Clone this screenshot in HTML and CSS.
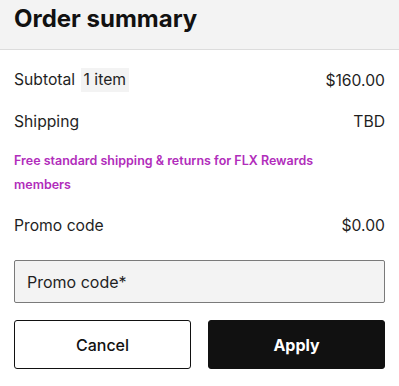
FILE: index.html
```html
<!DOCTYPE html>
<html lang="en">
<head>
    <meta charset="UTF-8">
    <meta name="viewport" content="width=device-width, initial-scale=1.0">
    <title>Order summary</title>
    <link rel="stylesheet" href="styles.css">
</head>
<body>

    <div class="summary">
        <div class="summary-header">
            <h2>Order summary</h2>
        </div>

        <div class="summary-body">
            <div class="row row-subtotal">
                <span class="label">Subtotal <span class="pill">1 item</span></span>
                <span class="value">$160.00</span>
            </div>

            <div class="row row-shipping">
                <span class="label">Shipping</span>
                <span class="value">TBD</span>
            </div>

            <p class="promo-note">Free standard shipping &amp; returns for FLX Rewards members</p>

            <div class="row row-promo">
                <span class="label">Promo code</span>
                <span class="value">$0.00</span>
            </div>

            <!-- Promo code form -->
            <div class="promo-form">
                <div class="promo-input">Promo code*</div>
                <div class="actions">
                    <button class="cancel-btn">Cancel</button>
                    <button class="apply-btn">Apply</button>
                </div>
            </div>
        </div>
    </div>

</body>
</html>
```

FILE: styles.css
```css
body {
    margin: 0;
    font-family: Inter, "Noto Sans", Arial, sans-serif;
    color: #1f1f1f;
    background-color: #fff;
}

.summary-header {
    background-color: #f3f3f3;
    border-bottom: 1px solid #dcdcdc;
    height: 50px;
    box-sizing: border-box;
    padding: 4px 14px 0;
}

.summary-header h2 {
    margin: 0;
    font-size: 24px;
    line-height: 29px;
    font-weight: 700;
    color: #111;
}

.summary-body {
    padding: 18px 14px 0;
}

.row {
    display: flex;
    justify-content: space-between;
    align-items: center;
    height: 24px;
    font-size: 15.7px;
}

.row-subtotal {
    margin-bottom: 17px;
}

.row-shipping {
    margin-bottom: 16px;
}

.pill {
    display: inline-block;
    background-color: #f3f3f3;
    padding: 0 3px;
    line-height: 24px;
    margin-left: 1px;
}

/* Rewards note */
.promo-note {
    margin: 0 0 16px;
    font-size: 12.5px;
    font-weight: 600;
    line-height: 24px;
    color: #b12dbb;
    padding-right: 40px;
}

.row-promo {
    margin-bottom: 23px;
}

.promo-input {
    height: 41px;
    border: 1px solid #7a7a7a;
    border-radius: 2px;
    background-color: #f3f3f3;
    padding: 0 12px;
    display: flex;
    align-items: center;
    font-size: 16px;
}

.actions {
    display: flex;
    gap: 17px;
    margin-top: 17px;
}

.actions button {
    flex: 1;
    height: 49px;
    border-radius: 3px;
    font-family: inherit;
    font-size: 16px;
    cursor: pointer;
}

.cancel-btn {
    background-color: #fff;
    border: 1px solid #111;
    color: #111;
    font-weight: 500;
}

.apply-btn {
    background-color: #111;
    border: 1px solid #111;
    color: #fff;
    font-weight: 700;
}
```
